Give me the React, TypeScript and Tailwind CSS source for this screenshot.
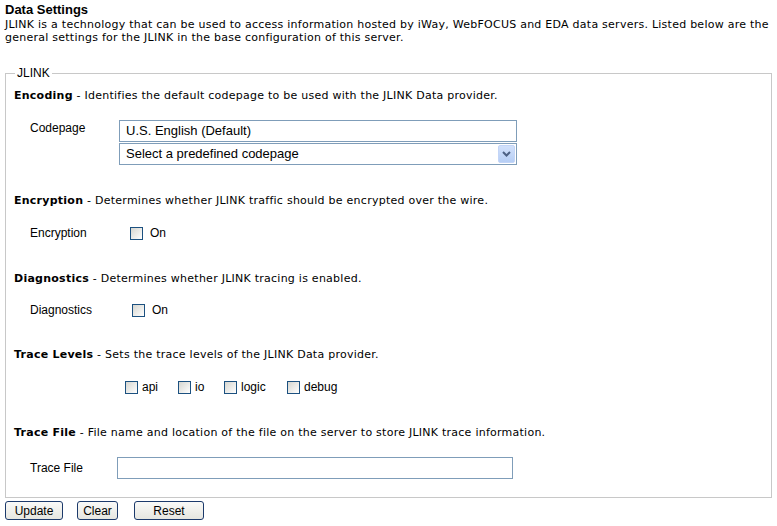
import React from "react";

const verdana = { fontFamily: '"DejaVu Sans", Verdana, sans-serif', letterSpacing: "0.25px" };
const arial = { fontFamily: '"Liberation Sans", Arial, sans-serif' };

function Check({ label }: { label?: string }) {
  return (
    <span className="flex items-center">
      <span className="block w-[13px] h-[13px] border border-[#1c5180] bg-gradient-to-br from-[#d6d6d0] to-[#ffffff]" />
      {label ? <span className="ml-[4px] text-[12px] text-black" style={arial}>{label}</span> : null}
    </span>
  );
}

function Heading({ bold, text }: { bold: string; text: string }) {
  return (
    <div className="text-[11px] leading-[13px] text-black" style={verdana}>
      <b>{bold}</b> - {text}
    </div>
  );
}

export default function App() {
  return (
    <div className="w-[777px] h-[526px] bg-white overflow-hidden text-black" style={arial}>
      <div className="pl-[5px] pt-[3px]">
        <div className="text-[13px] leading-[14px] font-bold" style={arial}>Data Settings</div>
        <div className="text-[11px] leading-[13px] mt-[1px] whitespace-nowrap" style={verdana}>
          JLINK is a technology that can be used to access information hosted by iWay, WebFOCUS and EDA data servers. Listed below are the
          <br />
          general settings for the JLINK in the base configuration of this server.
        </div>
      </div>

      <fieldset className="mx-[5px] mt-[22px] border border-[#c8c8c8] pl-[8px] pr-[8px] h-[432px]">
        <legend className="ml-[1px] px-[2px] text-[12px] leading-[14px] text-black" style={arial}>JLINK</legend>

        <div className="mt-[9px]">
          <Heading bold="Encoding" text="Identifies the default codepage to be used with the JLINK Data provider." />
        </div>

        <div className="flex mt-[18px]">
          <div className="w-[105px] pl-[16px] text-[12px] leading-[14px] pt-[1px]" style={arial}>Codepage</div>
          <div className="flex flex-col gap-[1px]">
            <div className="w-[398px] h-[22px] border border-[#7f9db9] flex items-center px-[6px] text-[13px]" style={arial}>
              U.S. English (Default)
            </div>
            <div className="w-[398px] h-[22px] border border-[#7f9db9] flex items-center justify-between pl-[6px] pr-[1px] text-[13px]" style={arial}>
              <span>Select a predefined codepage</span>
              <span className="w-[17px] h-[18px] rounded-[2px] bg-gradient-to-b from-[#d2e1fb] to-[#b6cef5] border border-[#c3d5f7] flex items-center justify-center">
                <svg width="9" height="6" viewBox="0 0 9 6">
                  <path d="M1 1 L4.5 4.5 L8 1" stroke="#4d6185" strokeWidth="2" fill="none" />
                </svg>
              </span>
            </div>
          </div>
        </div>

        <div className="mt-[29px]">
          <Heading bold="Encryption" text="Determines whether JLINK traffic should be encrypted over the wire." />
        </div>
        <div className="flex items-center mt-[19px] h-[14px]">
          <div className="w-[116px] pl-[16px] text-[12px]" style={arial}>Encryption</div>
          <Check />
          <span className="ml-[7px] text-[12px]" style={arial}>On</span>
        </div>

        <div className="mt-[32px]">
          <Heading bold="Diagnostics" text="Determines whether JLINK tracing is enabled." />
        </div>
        <div className="flex items-center mt-[18px] h-[14px]">
          <div className="w-[118px] pl-[16px] text-[12px]" style={arial}>Diagnostics</div>
          <Check />
          <span className="ml-[7px] text-[12px]" style={arial}>On</span>
        </div>

        <div className="mt-[31px]">
          <Heading bold="Trace Levels" text="Sets the trace levels of the JLINK Data provider." />
        </div>
        <div className="flex items-center mt-[19px] h-[14px] pl-[111px]">
          <div className="w-[53px]"><Check label="api" /></div>
          <div className="w-[46px]"><Check label="io" /></div>
          <div className="w-[63px]"><Check label="logic" /></div>
          <div><Check label="debug" /></div>
        </div>

        <div className="mt-[32px]">
          <Heading bold="Trace File" text="File name and location of the file on the server to store JLINK trace information." />
        </div>
        <div className="flex items-center mt-[18px]">
          <div className="w-[103px] pl-[16px] text-[12px]" style={arial}>Trace File</div>
          <div className="w-[396px] h-[22px] border border-[#7f9db9]" />
        </div>
      </fieldset>

      <div className="flex items-center pl-[5px] mt-[3px] gap-[15px]">
        <button className="w-[58px] h-[19px] rounded-[3px] border border-[#1c3a6b] bg-gradient-to-b from-[#fafaf8] to-[#e6e6e0] text-[12px] leading-[14px]" style={arial}>Update</button>
        <button className="w-[41px] h-[19px] rounded-[3px] border border-[#1c3a6b] bg-gradient-to-b from-[#fafaf8] to-[#e6e6e0] text-[12px] leading-[14px] -ml-[1px]" style={arial}>Clear</button>
        <button className="w-[70px] h-[19px] rounded-[3px] border border-[#1c3a6b] bg-gradient-to-b from-[#fafaf8] to-[#e6e6e0] text-[12px] leading-[14px] ml-[1px]" style={arial}>Reset</button>
      </div>
    </div>
  );
}
